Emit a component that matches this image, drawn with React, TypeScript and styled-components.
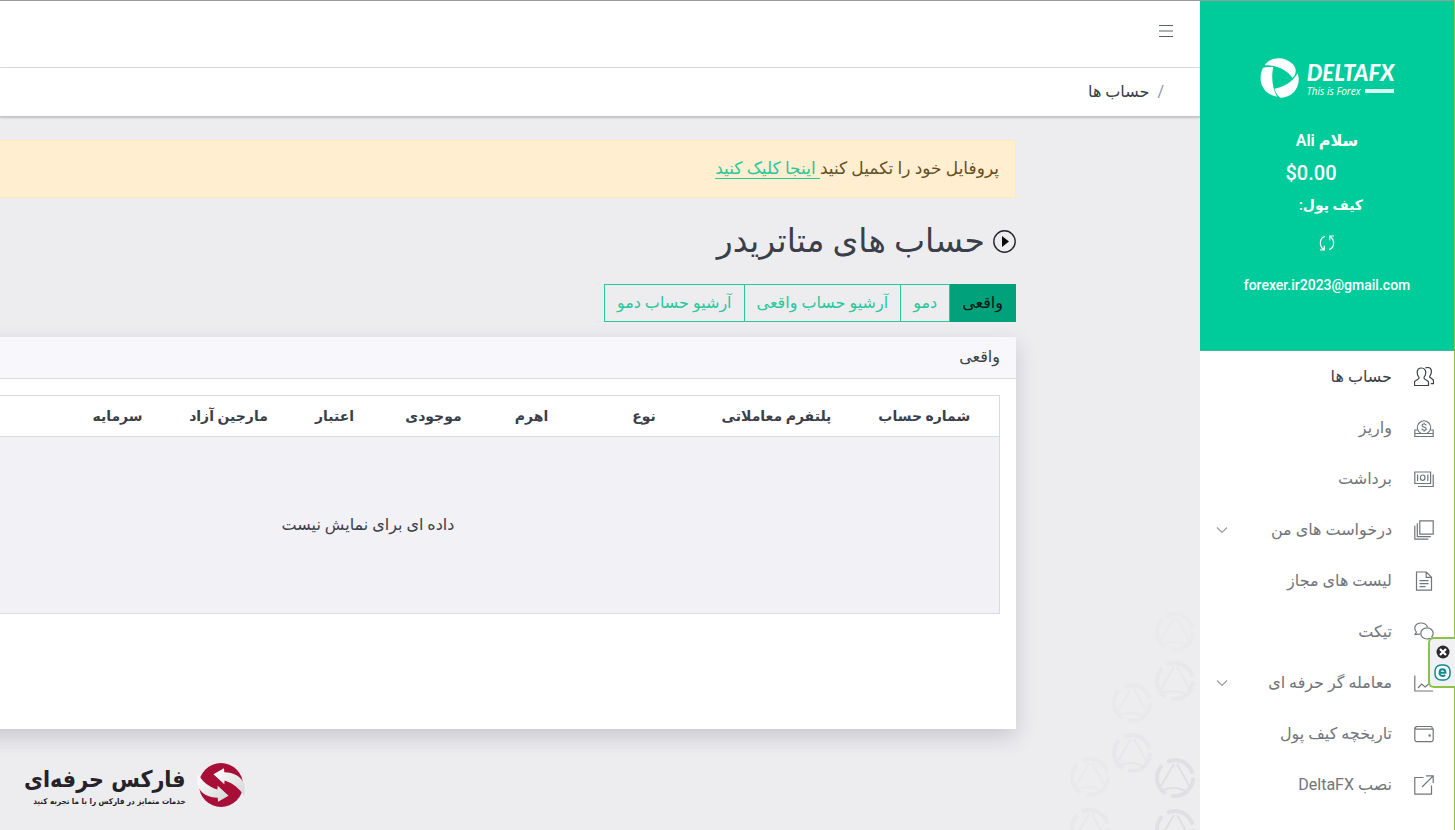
import React from 'react';
import styled, { createGlobalStyle } from 'styled-components';

const colors = {
  brand: '#00cc9b',
  brandDark: '#00a17b',
  link: '#2ac79b',
  ink: '#3b3f4a',
  muted: '#72757b',
  line: '#d8dbe0',
};

const GlobalStyle = createGlobalStyle`
  *, *::before, *::after { box-sizing: border-box; }
  body {
    margin: 0;
    background: #ededf0;
    color: ${colors.ink};
    font-family: Roboto, 'DejaVu Sans', sans-serif;
    font-size: 16px;
    line-height: 24px;
  }
  button { font: inherit; cursor: pointer; }
`;

const Shell = styled.div`
  position: relative;
  display: flex;
  height: 100vh;
  overflow: hidden;
  border-top: 1px solid #999a9c;
`;

/* Sidebar */

const Sidebar = styled.aside`
  flex: 0 0 255px;
  display: flex;
  flex-direction: column;
  background: #fff;
  border-right: 1px solid #8bc34a;
  z-index: 1;
`;

const Profile = styled.div`
  display: flex;
  flex-direction: column;
  align-items: center;
  height: 350px;
  flex: none;
  padding-top: 57px;
  background: ${colors.brand};
  border-bottom: 1px solid #3fb59c;
  color: #fff;
`;

const BrandLink = styled.a`
  display: flex;
  align-items: center;
  gap: 7px;
  direction: ltr;
  color: #fff;
  text-decoration: none;
`;

const BrandText = styled.span`
  display: flex;
  flex-direction: column;
`;

const BrandName = styled.span`
  font: italic 900 22px/26px Lato, sans-serif;
`;

const BrandTag = styled.span`
  display: flex;
  align-items: center;
  gap: 4px;
  font: italic 500 10px/10px 'Open Sans', sans-serif;
  white-space: nowrap;

  &::after {
    content: '';
    flex: 1;
    height: 4px;
    background: #d4fff3;
  }
`;

const Greeting = styled.div`
  margin-top: 31px;
  font-weight: 600;
`;

const Balance = styled.div`
  margin-top: 8px;
  padding-right: 32px;
  font-size: 20px;
  font-weight: 500;
`;

const Wallet = styled.div`
  margin-top: 8px;
  padding-left: 8px;
  font-size: 14px;
  font-weight: 600;
`;

const RefreshButton = styled.button`
  display: flex;
  margin-top: 17px;
  padding: 0;
  border: 0;
  background: none;
  color: #fff;
`;

const Email = styled.div`
  margin-top: 21px;
  font-size: 14px;
  font-weight: 500;
`;

const NavList = styled.ul`
  margin: 0;
  padding: 0;
  list-style: none;
`;

const NavLink = styled.a<{ $active?: boolean }>`
  display: flex;
  align-items: center;
  gap: 22px;
  height: 51px;
  padding: 0 20px 0 16px;
  color: ${(p) => (p.$active ? colors.ink : colors.muted)};
  text-decoration: none;

  svg { flex: none; }
`;

const NavLabel = styled.span`
  flex: 1;
  white-space: nowrap;
`;

/* Main column */

const Main = styled.div`
  flex: 1;
  min-width: 0;
  display: flex;
  flex-direction: column;
  position: relative;
  overflow: hidden;
`;

const TopBar = styled.header`
  display: flex;
  align-items: center;
  flex: none;
  height: 67px;
  padding: 0 26px 6px;
  background: #fff;
  border-bottom: 1px solid ${colors.line};
`;

const MenuButton = styled.button`
  display: flex;
  padding: 0;
  border: 0;
  background: none;
  color: #5c6068;
`;

const Breadcrumb = styled.nav`
  display: flex;
  align-items: center;
  gap: 8px;
  flex: none;
  height: 49px;
  padding: 0 36px;
  background: #fff;
  border-bottom: 1px solid #c3c5ca;
  box-shadow: 0 1px 2px rgba(0, 0, 0, 0.2);
`;

const Separator = styled.span`
  color: #8a93a2;
`;

const Content = styled.main`
  position: relative;
  padding: 23px 184px 0 0;
`;

const Container = styled.div`
  min-width: 1296px;
`;

const Alert = styled.div`
  padding: 15px 16px 17px;
  background: #ffeecf;
  border: 1px solid #ffe9bf;
  color: #654f24;
  font-size: 17px;

  a {
    color: ${colors.link};
    text-decoration: none;
    border-bottom: 1px solid ${colors.link};
  }
`;

const Title = styled.h1`
  display: flex;
  align-items: center;
  gap: 8px;
  margin: 23px 0;
  font-size: 33px;
  font-weight: 500;
  line-height: 40px;
  color: ${colors.ink};
`;

const Tabs = styled.div`
  display: flex;
`;

const Tab = styled.button<{ $active?: boolean }>`
  height: 38px;
  padding: 0 12px;
  border: 1px solid ${(p) => (p.$active ? colors.brandDark : colors.link)};
  background: ${(p) => (p.$active ? colors.brandDark : 'transparent')};
  color: ${(p) => (p.$active ? '#0b1512' : colors.link)};

  & + & { margin-right: -1px; }
`;

const Card = styled.section`
  margin-top: 15px;
  min-height: 392px;
  background: #fff;
  box-shadow: 0 8px 20px rgba(60, 50, 75, 0.2);
`;

const CardHeader = styled.h2`
  margin: 0;
  padding: 8px 16px 9px;
  background: #f8f7fb;
  border-bottom: 1px solid ${colors.line};
  font-size: 16px;
  font-weight: 400;
  line-height: 24px;
`;

const CardBody = styled.div`
  padding: 16px;
`;

const Table = styled.table`
  width: 100%;
  table-layout: fixed;
  border-collapse: collapse;
  border: 1px solid ${colors.line};

  th {
    height: 41px;
    padding: 0;
    font-size: 14px;
    font-weight: 700;
    white-space: nowrap;
    border-bottom: 1px solid ${colors.line};
  }
`;

const EmptyCell = styled.td`
  height: 177px;
  padding: 0;
  background: #f2f1f6;
  text-align: center;
`;

const Pattern = styled.svg`
  position: absolute;
  right: 0;
  bottom: 0;
  fill: none;
  stroke: #e0e0e4;
`;

/* Overlays */

const Watermark = styled.div`
  position: absolute;
  left: 24px;
  bottom: 22px;
  display: flex;
  align-items: center;
  gap: 10px;
  color: #25222a;
  font-family: 'DejaVu Sans Condensed', 'DejaVu Sans', sans-serif;
  font-weight: 700;
  white-space: nowrap;
`;

const WatermarkText = styled.div`
  display: flex;
  flex-direction: column;
`;

const WatermarkName = styled.strong`
  font-size: 23px;
  line-height: 34px;
`;

const WatermarkTag = styled.span`
  font-size: 8px;
  line-height: 12px;
`;

const Widget = styled.div`
  position: absolute;
  right: 0;
  top: 636px;
  z-index: 2;
  display: flex;
  flex-direction: column;
  align-items: center;
  gap: 5px;
  padding: 6px 4px 5px;
  background: #f1f1f3;
  border: 2px solid #8bc34a;
  border-right: 0;
  border-radius: 6px 0 0 6px;
`;

const WidgetButton = styled.button`
  display: flex;
  padding: 0;
  border: 0;
  background: none;
`;

const icons: Record<string, React.ReactNode> = {
  people: (
    <>
      <path d="M7.500 1C4.800 1 3.200 3 3.200 5.600c0 1.500.5 2.900 1.300 3.900.5.700.5 1.900 0 2.400L1.300 14c-.5.300-.8.900-.8 1.500V18.500h14v-3c0-.6-.3-1.200-.8-1.500l-3.200-2.100c-.5-.5-.5-1.700 0-2.400.8-1 1.300-2.400 1.300-3.900C11.800 3 10.200 1 7.500 1z" />
      <path d="M11.500 1.200C12 .7 12.800.5 13.600.5c2.400 0 3.800 1.800 3.800 4.200 0 1.500-.4 2.700-1.200 3.600-.5.700-.5 1.900 0 2.300l2.600 1.800c.4.300.7.800.7 1.300v3h-2.700" />
    </>
  ),
  deposit: (
    <>
      <path d="M4.400 13A6.600 6.600 0 1 1 15.600 13" />
      <path d="M3.500 12H.8v6.500h18.400V12h-2.700M.8 15.500h18.400M4.400 13c.8 1.200 1.800 2 2.800 2.500M15.600 13c-.8 1.200-1.800 2-2.800 2.500" />
      <path d="M12.200 7.500c-.3-2-4.200-2-4.200 0s4.300 1.200 4.300 3.200-4.200 2.100-4.500 0M10.100 4.700V6M10.100 12.200v1.500" />
    </>
  ),
  cash: (
    <>
      <path d="M.8 3h15.800v11.500H.8zM19.200 5.500v12H4M3.600 5.500v6.500M13.800 5.500v6.500" />
      <ellipse cx="8.700" cy="8.700" rx="2.300" ry="2.700" />
    </>
  ),
  copies: <path d="M5.800.8h13.400v13.400H5.800zM3.300 3.200v13.500h13.500M.8 5.700v13.500h13.500" />,
  document: <path d="M2.500 1h9.800l5.200 5.200v13h-15zM12.200 1v5.300h5.300M5.500 9.700h9M5.500 12.700h9M5.500 15.600h6" />,
  chat: (
    <>
      <path d="M6 12c-.6.200-1.200.2-1.800.1L1 12.600l1.400-2.500C-1.200 6 1.800 1 7 1c3.600 0 5.800 1.800 6.600 4.300" />
      <path d="M13 5.800c-3.500 0-6.200 2.500-6.200 5.600s2.700 5.600 6.200 5.600c1 0 1.900-.2 2.700-.6l3.500 1.100-1.400-2.800c.9-1 1.400-2.100 1.400-3.300 0-3.100-2.700-5.600-6.200-5.600z" />
    </>
  ),
  chart: <path d="M.8 2.500v15.500h18.400M4 15l3.600-4 3.600 3L19 7" />,
  wallet: (
    <>
      <path d="M2.800 2.500h14a1.500 1.500 0 0 1 1.500 1.500v1.200h.9v10.500a2 2 0 0 1-2 2H2.800a2 2 0 0 1-2-2v-11a2 2 0 0 1 2-2zM1.200 4.200c.3.700.9 1 1.600 1h15.500" />
      <circle cx="15.600" cy="11.500" r=".6" fill="currentColor" />
    </>
  ),
  external: <path d="M9.500 2.500H.8v16.700h16.700V10.500M12 .8h7.200V8M19.200.8L8 12" />,
};

const Icon = ({ name }: { name: string }) => (
  <svg width="20" height="20" viewBox="0 0 20 20" fill="none" stroke="currentColor" strokeWidth="1.2" aria-hidden="true">
    {icons[name]}
  </svg>
);

const navItems = [
  { icon: 'people', label: 'حساب ها', active: true },
  { icon: 'deposit', label: 'واریز' },
  { icon: 'cash', label: 'برداشت' },
  { icon: 'copies', label: 'درخواست های من', expandable: true },
  { icon: 'document', label: 'لیست های مجاز' },
  { icon: 'chat', label: 'تیکت' },
  { icon: 'chart', label: 'معامله گر حرفه ای', expandable: true },
  { icon: 'wallet', label: 'تاریخچه کیف پول' },
  { icon: 'external', label: 'نصب DeltaFX' },
];

const tabs = ['واقعی', 'دمو', 'آرشیو حساب واقعی', 'آرشیو حساب دمو'];

const columns = [
  { label: 'شماره حساب', width: 150 },
  { label: 'پلتفرم معاملاتی', width: 146 },
  { label: 'نوع', width: 119 },
  { label: 'اهرم', width: 106 },
  { label: 'موجودی', width: 90 },
  { label: 'اعتبار', width: 108 },
  { label: 'مارجین آزاد', width: 104 },
  { label: 'سرمایه', width: 118 },
];

const DeltaMark = () => (
  <svg width="40" height="40" viewBox="0 0 118 120" fill="#fff" aria-hidden="true">
    <path d="M13 22C30-3 70-8 97 18c7 8 10 16 9 23-1 9-5 15-10 18C84 42 58 20 13 22z" />
    <path d="M8 30c8-3 22-4 31-2-6 24-5 58 11 88C20 112-2 85 1 55c1-10 3-19 7-25z" />
    <path d="M112 46c13 36-14 75-52 73-9-6-15-17-17-27 24-3 52-18 69-46z" />
  </svg>
);

const ForexMark = () => (
  <svg width="50" height="46" viewBox="0 0 150 140" aria-hidden="true">
    <defs>
      <linearGradient id="ribbon" x1="0" y1="0" x2="1" y2="1">
        <stop offset="0" stopColor="#ffffff" />
        <stop offset="1" stopColor="#d3d6d6" />
      </linearGradient>
    </defs>
    <circle cx="75" cy="70" r="67" fill="#a80f36" />
    <g fill="url(#ribbon)">
      <path d="M52 37L84 19l1 12c27 0 52 12 62 38l-1 36C134 82 112 64 86 56l-1 12z" />
      <path d="M98 103L66 121l-1-12C38 109 13 97 3 71l1-36c12 23 34 41 60 49l1-12z" />
    </g>
  </svg>
);

const patternRings = [
  { x: 175, y: 52, o: 0.2 },
  { x: 175, y: 101, o: 0.35 },
  { x: 132, y: 123, o: 0.25 },
  { x: 132, y: 173, o: 0.4 },
  { x: 90, y: 197, o: 0.25 },
  { x: 90, y: 248, o: 0.35 },
  { x: 175, y: 198, o: 1 },
  { x: 175, y: 249, o: 1 },
];

export default function App() {
  return (
    <>
      <GlobalStyle />
      <Shell dir="rtl" lang="fa">
        <Sidebar>
          <Profile>
            <BrandLink href="#">
              <DeltaMark />
              <BrandText>
                <BrandName>DELTAFX</BrandName>
                <BrandTag>This is Forex</BrandTag>
              </BrandText>
            </BrandLink>
            <Greeting>سلام Ali</Greeting>
            <Balance dir="ltr">$0.00</Balance>
            <Wallet>کیف پول:</Wallet>
            <RefreshButton aria-label="بروزرسانی">
              <svg width="18" height="18" viewBox="0 0 18 18" fill="none" stroke="currentColor" strokeWidth="1.200">
                <path d="M7 2.500C1 4 1 12.500 6 15.500M2 16h4.300v-4.300M11 15.500C17 14 17 5.500 12 2.500M16 2h-4.300v4.300" />
              </svg>
            </RefreshButton>
            <Email>forexer.ir2023@gmail.com</Email>
          </Profile>
          <nav>
            <NavList>
              {navItems.map((item) => (
                <li key={item.label}>
                  <NavLink href="#" $active={item.active}>
                    <Icon name={item.icon} />
                    <NavLabel>{item.label}</NavLabel>
                    {item.expandable && (
                      <svg width="12" height="12" viewBox="0 0 12 12" fill="none" stroke="#9a9da3" strokeWidth="1.200">
                        <path d="M1 3.500l5 5 5-5" />
                      </svg>
                    )}
                  </NavLink>
                </li>
              ))}
            </NavList>
          </nav>
        </Sidebar>

        <Main>
          <TopBar>
            <MenuButton aria-label="منو">
              <svg width="16" height="14" viewBox="0 0 16 14" fill="none" stroke="currentColor">
                <path d="M1 1.500h14M1 7h14M1 12.500h14" />
              </svg>
            </MenuButton>
          </TopBar>
          <Breadcrumb>
            <Separator>/</Separator>
            <span>حساب ها</span>
          </Breadcrumb>
          <Pattern width="200" height="250" viewBox="0 0 200 250" aria-hidden="true">
            {patternRings.map((r) => (
              <g key={`${r.x}-${r.y}`} transform={`translate(${r.x} ${r.y})`} opacity={r.o}>
                <circle r="18" strokeWidth="4" strokeDasharray="32 6" />
                <path d="M-1-14L-14 8M2-14l13 23M-12 12c8-3 16-3 24 2" strokeWidth="2" />
              </g>
            ))}
          </Pattern>
          <Content>
            <Container>
              <Alert>
                پروفایل خود را تکمیل کنید<a href="#"> اینجا کلیک کنید</a>
              </Alert>
              <Title>
                <svg width="23" height="23" viewBox="0 0 23 23" aria-hidden="true">
                  <circle cx="11.500" cy="11.500" r="10.700" fill="none" stroke="#25262b" strokeWidth="1.400" />
                  <path d="M9 6l7 5.500L9 17z" fill="#08080a" />
                </svg>
                حساب های متاتریدر
              </Title>
              <Tabs role="tablist">
                {tabs.map((label, i) => (
                  <Tab key={label} role="tab" aria-selected={i === 0} $active={i === 0}>
                    {label}
                  </Tab>
                ))}
              </Tabs>
              <Card>
                <CardHeader>واقعی</CardHeader>
                <CardBody>
                  <Table>
                    <colgroup>
                      {columns.map((c) => (
                        <col key={c.label} width={c.width} />
                      ))}
                      <col />
                    </colgroup>
                    <thead>
                      <tr>
                        {columns.map((c) => (
                          <th key={c.label} scope="col">{c.label}</th>
                        ))}
                        <th />
                      </tr>
                    </thead>
                    <tbody>
                      <tr>
                        <EmptyCell colSpan={9}>داده ای برای نمایش نیست</EmptyCell>
                      </tr>
                    </tbody>
                  </Table>
                </CardBody>
              </Card>
            </Container>
          </Content>
        </Main>

        <Watermark>
          <ForexMark />
          <WatermarkText>
            <WatermarkName>فارکس حرفه‌ای</WatermarkName>
            <WatermarkTag>خدمات متمایز در فارکس را با ما تجربه کنید</WatermarkTag>
          </WatermarkText>
        </Watermark>

        <Widget>
          <WidgetButton aria-label="بستن">
            <svg width="14" height="14" viewBox="0 0 14 14">
              <circle cx="7" cy="7" r="6.500" fill="#2a2a2d" />
              <path d="M4 4l6 6M10 4l-6 6" stroke="#fff" strokeWidth="2.200" />
            </svg>
          </WidgetButton>
          <WidgetButton aria-label="e">
            <svg width="17" height="17" viewBox="0 0 17 17" fill="none" stroke="#12898c">
              <rect x="1" y="1" width="15" height="15" rx="6" fill="#fff" strokeWidth="1.500" />
              <path d="M5.500 8.700h6c0-4.600-6-4.600-6 0 0 3.600 4 3.900 5.600 2.300" strokeWidth="1.900" />
            </svg>
          </WidgetButton>
        </Widget>
      </Shell>
    </>
  );
}
